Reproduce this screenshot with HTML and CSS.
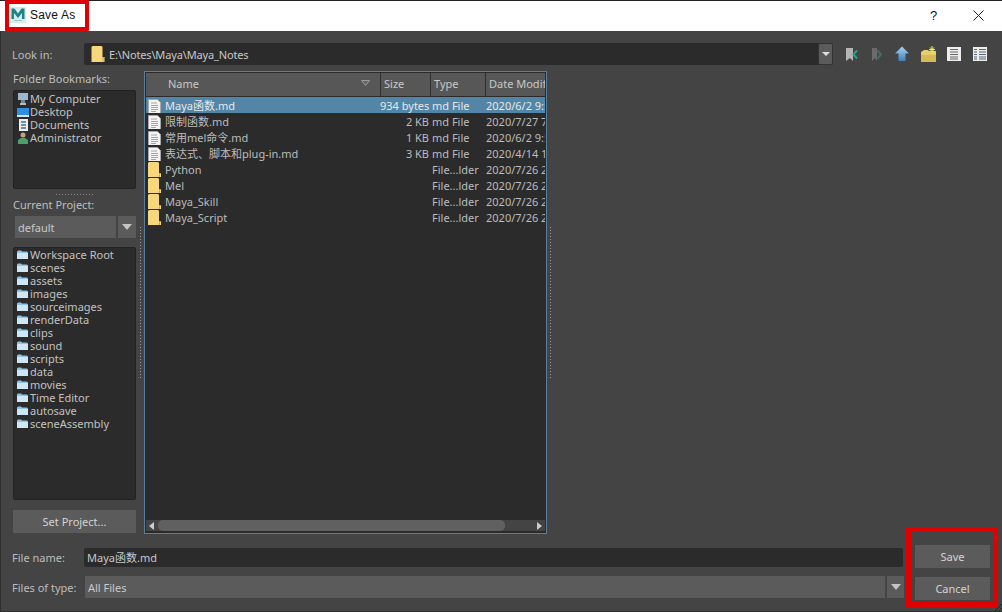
FILE: index.html
```html
<!DOCTYPE html>
<html lang="en">
<head>
<meta charset="utf-8">
<title>Save As</title>
<link rel="stylesheet" href="styles.css">
</head>
<body>
<svg class="defs" width="0" height="0" aria-hidden="true">
  <symbol id="folder" viewBox="0 0 13 16"><path d="M1 0h9l1 1v10h2v5H0V1z" fill="#f7d77a"/><path d="M11 11h2v1h-1v4h-1z" fill="#c9a548"/></symbol>
  <symbol id="doc" viewBox="0 0 13 15"><path d="M.5.5h9l3 3v11H.5z" fill="#f4f4f4" stroke="#a8a8a8"/><path d="M3 4h6M3 6.500h7M3 8.500h7M3 10.500h7M3 12.500h5" stroke="#a4a4a4"/></symbol>
  <symbol id="pfolder" viewBox="0 0 11 9"><path d="M0 1.500 1 .5h3l1 1h5l1 1V9H0z" fill="#8cc3e8"/><path d="M0 3h11v6H0z" fill="#cfe6f5"/></symbol>
</svg>
<div class="window">
  <header class="titlebar">
    <svg class="applogo" width="16" height="16" viewBox="0 0 16 16"><rect width="16" height="16" fill="#d8ecea"/><path d="M1.500 12V1.500h3L8 6.500l3.500-5h3V12H12V6L8 11 4 6v6z" fill="#1c8489"/><rect x="4" y="13" width="8" height="1" fill="#9cc"/></svg>
    <span class="apptitle">Save As</span>
    <span class="helpbtn">?</span>
    <svg class="closebtn" width="11" height="11" viewBox="0 0 11 11"><path d="M.5.5l10 10M10.500.5l-10 10" stroke="#222" fill="none"/></svg>
  </header>
  <div class="dialog">
    <div class="lookin">
      <span class="lbl lbl-look">Look in:</span>
      <div class="pathcombo">
        <svg class="pathfolder" width="14" height="16"><use href="#folder"/></svg>
        <span class="pathtext">E:\Notes\Maya\Maya_Notes</span>
        <span class="patharrow"><i class="tri"></i></span>
      </div>
      <div class="tools">
        <svg width="16" height="16" viewBox="0 0 16 16"><path d="M3 2h7v13l-3-3-4 3z" fill="#b5b5b5"/><path d="M14 4.500 10.500 8.500 14 12.500" stroke="#2f9c8c" stroke-width="2" fill="none"/></svg>
        <svg width="16" height="16" viewBox="0 0 16 16"><path d="M3 2h5v13l-2-3-3 3z" fill="#6b6b6b"/><path d="M8.500 4.500 12 8.500 8.500 12.500" stroke="#3f6f6a" stroke-width="2" fill="none"/></svg>
        <svg width="16" height="16" viewBox="0 0 16 16"><defs><linearGradient id="up" x1="0" y1="0" x2="0" y2="1"><stop offset="0" stop-color="#a8d6f4"/><stop offset="1" stop-color="#3f7fb8"/></linearGradient></defs><path d="M7 0.500 14 7.500H10.500V15H3.500V7.500H0z" fill="url(#up)"/></svg>
        <svg width="16" height="16" viewBox="0 0 16 16"><path d="M0 6l3-2h4l1 1h7v11H0z" fill="#e8cf6e"/><path d="M0 9h15v7H0z" fill="#d8ba52"/><path d="M11 0v7M8 3.500h6M9 1.500l4 4M13 1.500l-4 4" stroke="#f5f04a"/></svg>
        <svg width="14" height="14" viewBox="0 0 14 14"><rect width="14" height="14" fill="#eee"/><path d="M3 2.500h8M3 5h8M3 7.500h8M3 10h8M3 12h8" stroke="#666"/></svg>
        <svg class="lasttool" width="14" height="14" viewBox="0 0 14 14"><rect width="14" height="14" fill="#eee"/><path d="M1 2.500h3M6 2.500h7M1 5h3M6 5h7M1 7.500h3M6 7.500h7M1 10h3M6 10h7M1 12h3M6 12h7" stroke="#567"/></svg>
      </div>
    </div>
    <div class="main">
      <aside class="side">
        <div class="lbl side-title">Folder Bookmarks:</div>
        <ul class="listbox bookmarks">
          <li><svg width="12" height="12" viewBox="0 0 12 12"><rect x="1" width="10" height="7" fill="#9db7cc"/><rect x="4" y="7" width="4" height="3" fill="#789"/><rect x="3" y="10" width="6" height="2" fill="#bbb"/></svg>My Computer</li>
          <li><svg width="12" height="12" viewBox="0 0 12 12"><rect y="2" width="12" height="8" fill="#2e8ee0"/><rect y="9" width="12" height="2" fill="#cfe6f5"/></svg>Desktop</li>
          <li><svg width="12" height="12" viewBox="0 0 12 12"><rect x="2" width="9" height="12" fill="#eee"/><path d="M4 3h5M4 6h5M4 9h5" stroke="#3a6f9c" stroke-width="1.500"/></svg>Documents</li>
          <li><svg width="12" height="12" viewBox="0 0 12 12"><circle cx="6" cy="3" r="2.500" fill="#c8a07c"/><path d="M1 12V8l3-2h4l3 2v4z" fill="#4f9c6c"/></svg>Administrator</li>
        </ul>
        <div class="hsplit"></div>
        <div class="lbl side-title project-title">Current Project:</div>
        <div class="projcombo"><span class="projname">default</span><span class="projarrow"><i class="tri tri-big"></i></span></div>
        <ul class="listbox folders">
          <li><svg width="11" height="9"><use href="#pfolder"/></svg>Workspace Root</li>
          <li><svg width="11" height="9"><use href="#pfolder"/></svg>scenes</li>
          <li><svg width="11" height="9"><use href="#pfolder"/></svg>assets</li>
          <li><svg width="11" height="9"><use href="#pfolder"/></svg>images</li>
          <li><svg width="11" height="9"><use href="#pfolder"/></svg>sourceimages</li>
          <li><svg width="11" height="9"><use href="#pfolder"/></svg>renderData</li>
          <li><svg width="11" height="9"><use href="#pfolder"/></svg>clips</li>
          <li><svg width="11" height="9"><use href="#pfolder"/></svg>sound</li>
          <li><svg width="11" height="9"><use href="#pfolder"/></svg>scripts</li>
          <li><svg width="11" height="9"><use href="#pfolder"/></svg>data</li>
          <li><svg width="11" height="9"><use href="#pfolder"/></svg>movies</li>
          <li><svg width="11" height="9"><use href="#pfolder"/></svg>Time Editor</li>
          <li><svg width="11" height="9"><use href="#pfolder"/></svg>autosave</li>
          <li><svg width="11" height="9"><use href="#pfolder"/></svg>sceneAssembly</li>
        </ul>
        <button class="btn setproject">Set Project...</button>
      </aside>
      <div class="vsplit"></div>
      <section class="files">
        <div class="fhead">
          <div class="hcell h-name">Name<svg class="sortmark" width="9" height="6" viewBox="0 0 9 6"><path d="M.5.500h8L4.500 5.500z" fill="#666" stroke="#9a9a9a"/></svg></div>
          <div class="hcell">Size</div>
          <div class="hcell">Type</div>
          <div class="hcell">Date Modif</div>
        </div>
        <div class="frows">
          <div class="frow selected"><span class="c-name"><svg width="13" height="15"><use href="#doc"/></svg>Maya函数.md</span><span class="c-size">934 bytes</span><span class="c-type">md File</span><span class="c-date">2020/6/2 9:50</span></div>
          <div class="frow"><span class="c-name"><svg width="13" height="15"><use href="#doc"/></svg>限制函数.md</span><span class="c-size">2 KB</span><span class="c-type">md File</span><span class="c-date">2020/7/27 7:10</span></div>
          <div class="frow"><span class="c-name"><svg width="13" height="15"><use href="#doc"/></svg>常用mel命令.md</span><span class="c-size">1 KB</span><span class="c-type">md File</span><span class="c-date">2020/6/2 9:50</span></div>
          <div class="frow"><span class="c-name"><svg width="13" height="15"><use href="#doc"/></svg>表达式、脚本和plug-in.md</span><span class="c-size">3 KB</span><span class="c-type">md File</span><span class="c-date">2020/4/14 12:00</span></div>
          <div class="frow"><span class="c-name"><svg width="13" height="16"><use href="#folder"/></svg>Python</span><span class="c-size"></span><span class="c-type">File...lder</span><span class="c-date">2020/7/26 22:00</span></div>
          <div class="frow"><span class="c-name"><svg width="13" height="16"><use href="#folder"/></svg>Mel</span><span class="c-size"></span><span class="c-type">File...lder</span><span class="c-date">2020/7/26 22:00</span></div>
          <div class="frow"><span class="c-name"><svg width="13" height="16"><use href="#folder"/></svg>Maya_Skill</span><span class="c-size"></span><span class="c-type">File...lder</span><span class="c-date">2020/7/26 22:00</span></div>
          <div class="frow"><span class="c-name"><svg width="13" height="16"><use href="#folder"/></svg>Maya_Script</span><span class="c-size"></span><span class="c-type">File...lder</span><span class="c-date">2020/7/26 22:00</span></div>
        </div>
        <div class="hscroll"><i class="arrow-l"></i><div class="thumbtrack"><div class="thumb"></div></div><i class="arrow-r"></i></div>
      </section>
      <div class="vsplit vsplit-right"></div>
    </div>
    <div class="bottom">
      <div class="fields">
        <div class="frowline nameline"><span class="lbl lbl-bottom">File name:</span><div class="nameinput">Maya函数.md</div></div>
        <div class="frowline typeline"><span class="lbl lbl-bottom">Files of type:</span><div class="typecombo"><span class="typename">All Files</span><span class="typearrow"><i class="tri tri-big"></i></span></div></div>
      </div>
      <div class="actions">
        <button class="btn action">Save</button>
        <button class="btn action">Cancel</button>
      </div>
    </div>
  </div>
  <div class="mark mark-title"></div>
  <div class="mark mark-actions"></div>
  <div class="grip"></div>
</div>
</body>
</html>
```
FILE: styles.css
```css
* { box-sizing: border-box; }
html, body { margin: 0; padding: 0; }
body { width: 1002px; height: 612px; overflow: hidden; background: #444; }
.defs { position: absolute; }
.window {
  position: relative; width: 1002px; height: 612px; display: flex; flex-direction: column;
  font-family: "Noto Sans", "Noto Sans CJK SC", sans-serif; font-size: 11px; color: #c8c8c8;
}
.titlebar {
  height: 31px; flex: none; background: #fff; border-top: 1px solid #222; display: flex; align-items: center;
  padding: 0 18px 2px 10px; color: #111;
}
.applogo { flex: none; }
.apptitle { font-family: "Liberation Sans", sans-serif; font-size: 12px; letter-spacing: .2px; margin-left: 4px; flex: 1; }
.helpbtn { font-family: "Liberation Sans", sans-serif; font-size: 13px; width: 43px; }
.closebtn { flex: none; }
.dialog { flex: 1; display: flex; flex-direction: column; padding: 12px 0 0 0; border-left: 1px solid #2f2f2f; border-bottom: 1px solid #2f2f2f; background: #444; }
.lbl { color: #bdbdbd; }
.lookin { display: flex; align-items: center; height: 22px; padding-left: 11px; }
.lbl-look { width: 72px; }
.pathcombo { width: 749px; height: 22px; display: flex; align-items: center; background: #2b2b2b; border-radius: 2px; padding-left: 7px; }
.pathfolder { flex: none; }
.pathtext { flex: 1; margin-left: 4px; letter-spacing: -.15px; }
.patharrow { width: 15px; height: 22px; background: #5b5b5b; border: 1px solid #333; border-radius: 2px; display: flex; align-items: center; justify-content: center; }
.tri { display: block; width: 0; height: 0; border-left: 4px solid transparent; border-right: 4px solid transparent; border-top: 4px solid #ddd; }
.tri-big { border-left-width: 5px; border-right-width: 5px; border-top: 6px solid #c4c4c4; }
.tools { display: flex; align-items: center; gap: 10px; margin-left: 10px; }
.lasttool { margin-left: 2px; }
.main { display: flex; height: 463px; margin-top: 6px; }
.side { width: 123px; margin-left: 12px; display: flex; flex-direction: column; }
.side-title { height: 19px; line-height: 16px; flex: none; }
.listbox { margin: 0; padding: 1px 0 0 3px; list-style: none; background: #2b2b2b; border: 1px solid #222; border-radius: 2px; color: #c2c2c2; flex: none; }
.listbox li { height: 13px; line-height: 13px; display: flex; align-items: center; gap: 2px; }
.listbox li svg { flex: none; }
.bookmarks { height: 99px; }
.bookmarks li { gap: 1px; }
.hsplit { height: 10px; flex: none; margin: 0 auto; width: 40px; background: radial-gradient(circle, #888 0.5px, transparent 1px) 0 4px / 3px 3px repeat-x; }
.project-title { height: 11px; line-height: 11px; }
.projcombo { margin: 6px 0 0 2px; height: 22px; flex: none; display: flex; background: #5b5b5b; }
.projname { flex: 1; line-height: 23px; padding-left: 3px; }
.projarrow { width: 20px; border-left: 2px solid #444; display: flex; align-items: center; justify-content: center; }
.folders { margin-top: 9px; height: 253px; padding-top: 0; }
.btn { font: inherit; color: #d4d4d4; background: #5b5b5b; border: 0; padding: 0; }
.setproject { margin-top: 10px; height: 23px; flex: none; }
.vsplit { width: 8px; height: 153px; flex: none; align-self: center; background: radial-gradient(circle, #999 0.5px, transparent 1px) center 0 / 3px 3px repeat-y; }
.vsplit-right { width: 7px; }
.files { width: 403px; flex: none; border: 1px solid #56809c; background: #2b2b2b; display: flex; flex-direction: column; padding: 1px 1px 2px 1px; }
.fhead { height: 24px; flex: none; display: grid; grid-template-columns: 235px 50px 55px 1fr; background: #575757; border-bottom: 1px solid #2b2b2b; overflow: hidden; }
.hcell { line-height: 22px; padding-left: 3px; white-space: nowrap; border-right: 1px solid #2f2f2f; color: #c8c8c8; }
.hcell:last-child { border-right: 0; }
.h-name { padding-left: 22px; position: relative; }
.sortmark { position: absolute; right: 10px; top: 7px; }
.frows { flex: 1; }
.frow { height: 16px; display: grid; grid-template-columns: 234px 50px 56px 1fr; line-height: 18px; overflow: hidden; white-space: nowrap; color: #bcbcbc; }
.selected { background: #5285a6; color: #e8e8e8; }
.c-name { display: flex; align-items: center; gap: 4px; padding-left: 2px; }
.c-name svg { flex: none; }
.c-size { text-align: right; padding-right: 1px; }
.c-type { padding-left: 2px; }
.c-date { overflow: hidden; }
.hscroll { height: 11px; flex: none; display: flex; align-items: center; background: #444; }
.arrow-l, .arrow-r { display: block; width: 0; height: 0; border-top: 4px solid transparent; border-bottom: 4px solid transparent; }
.arrow-l { border-right: 5px solid #ccc; margin-left: 3px; }
.arrow-r { border-left: 5px solid #ccc; margin-right: 3px; }
.thumbtrack { flex: 1; height: 11px; padding: 0 32px 0 4px; }
.thumb { height: 11px; background: #606060; border-radius: 5px; }
.bottom { display: flex; margin-top: 11px; }
.fields { width: 903px; padding-top: 3px; }
.frowline { display: flex; align-items: center; }
.nameline { height: 19px; }
.typeline { height: 22px; margin-top: 9px; }
.lbl-bottom { width: 72px; margin-left: 11px; }
.nameinput { width: 819px; height: 19px; line-height: 19px; background: #2b2b2b; border-radius: 2px; padding-left: 3px; }
.typecombo { width: 819px; height: 22px; margin-left: 1px; display: flex; background: #5b5b5b; }
.typename { flex: 1; line-height: 23px; padding-left: 3px; }
.typearrow { width: 19px; border-left: 2px solid #444; display: flex; align-items: center; justify-content: center; }
.actions { display: flex; flex-direction: column; gap: 9px; margin-left: 11px; }
.action { width: 75px; height: 23px; }
.mark { position: absolute; pointer-events: none; }
.mark-title { left: 5px; top: 0; width: 84px; height: 31px; border: 4px solid #e00000; border-radius: 1px; }
.mark-actions { left: 906px; top: 527px; width: 92px; height: 80px; border: 5px solid #e00000; }
.grip { position: absolute; right: 0; bottom: 0; width: 10px; height: 10px; background: repeating-linear-gradient(135deg, transparent 0 2px, #222 2px 3px); clip-path: polygon(100% 0, 100% 100%, 0 100%); }
```
